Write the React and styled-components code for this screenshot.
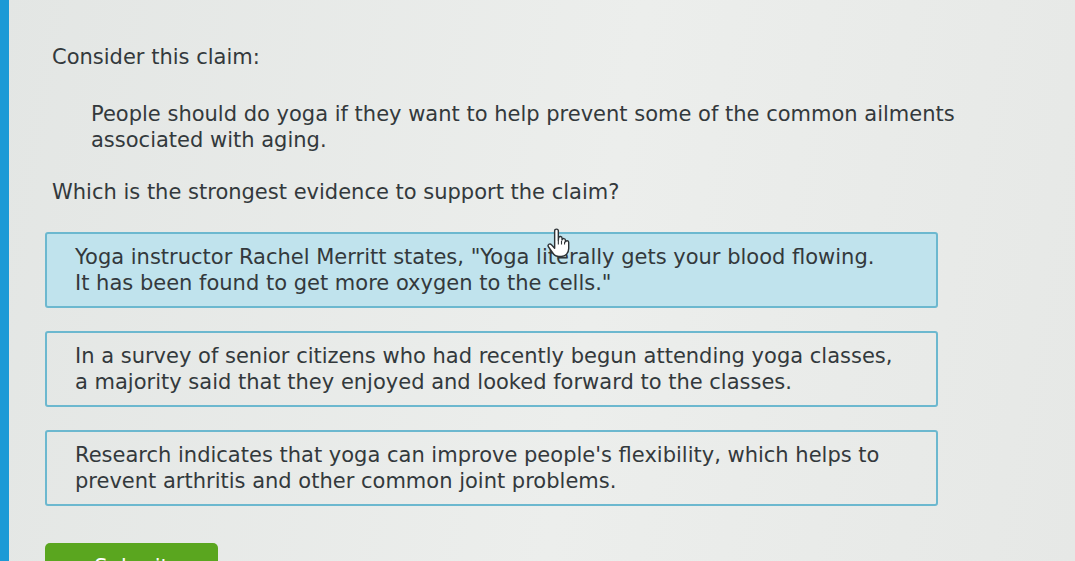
import React from 'react';
import styled, {createGlobalStyle} from 'styled-components';

const colors = {
  page: '#e7e9e7',
  text: '#33393c',
  edge: '#1c9ad6',
  border: '#6cb8cf',
  selected: '#c0e3ed',
  submit: '#5aa61f',
};

const GlobalStyle = createGlobalStyle`
  html, body {
    margin: 0;
    padding: 0;
    background: ${colors.page};
    overflow: hidden;
  }
`;

const Page = styled.div`
  width: 1075px;
  height: 561px;
  display: flex;
  background: linear-gradient(100deg, #e3e6e4 0%, #eceeec 55%, #e6e8e6 100%);
  font-family: "DejaVu Sans", Verdana, sans-serif;
  font-size: 21px;
  line-height: 26px;
  color: ${colors.text};
  overflow: hidden;
`;

const Edge = styled.div`
  width: 9px;
  flex-shrink: 0;
  background: ${colors.edge};
`;

const Content = styled.div`
  flex: 1;
  padding: 44px 0 0 36px;
  display: flex;
  flex-direction: column;
`;

const Heading = styled.div`
  padding-left: 7px;
`;

const Claim = styled.div`
  margin: 31px 0 0 46px;
`;

const Question = styled.div`
  margin-top: 26px;
  padding-left: 7px;
`;

const Options = styled.div`
  margin-top: 27px;
  width: 893px;
  display: flex;
  flex-direction: column;
  gap: 23px;
`;

const Option = styled.div`
  position: relative;
  box-sizing: border-box;
  padding: 10px 20px 10px 28px;
  border: 2px solid ${colors.border};
  border-radius: 3px;
  background: ${p => (p.$selected ? colors.selected : 'transparent')};
`;

const Pointer = styled.svg`
  position: absolute;
  left: 500px;
  top: -6px;
  width: 24px;
  height: 31px;
`;

const Submit = styled.button`
  margin-top: 37px;
  width: 173px;
  height: 44px;
  border: none;
  border-radius: 5px;
  background: ${colors.submit};
  color: #fff;
  font-family: inherit;
  font-size: 21px;
  line-height: 26px;
  padding: 11px 0 0;
  align-self: flex-start;
  display: flex;
  justify-content: center;
  align-items: flex-start;
`;

const HandCursor = () => (
  <Pointer viewBox="0 0 22 28">
    <path
      d="M7 2.5c0-1 .8-1.7 1.7-1.7s1.7.7 1.7 1.7v8.5l.2-2c.1-.9.9-1.5 1.8-1.4.8.1 1.4.8 1.4 1.6v1.5c.2-.8.9-1.3 1.7-1.2.8.1 1.4.8 1.4 1.6v1.4c.3-.7 1-1.1 1.7-1 .8.1 1.3.8 1.3 1.6v5.5c0 4-2.8 7.3-6.8 7.3h-2.2c-2.4 0-4.3-1.2-5.6-3.2L1.3 17c-.5-.8-.3-1.8.4-2.3.8-.5 1.8-.3 2.4.4L7 18.3z"
      fill="#fff"
      stroke="#2e3336"
      strokeWidth="1.3"
      strokeLinejoin="round"
    />
    <path d="M10.4 11v4M13.3 11.5v3.5M16.1 12.5v2.5" stroke="#2e3336" strokeWidth="1" />
  </Pointer>
);

const App = () => {
  return (
    <Page>
      <GlobalStyle />
      <Edge />
      <Content>
        <Heading>Consider this claim:</Heading>
        <Claim>
          People should do yoga if they want to help prevent some of the common ailments
          <br />
          associated with aging.
        </Claim>
        <Question>Which is the strongest evidence to support the claim?</Question>
        <Options>
          <Option $selected>
            Yoga instructor Rachel Merritt states, "Yoga literally gets your blood flowing.
            <br />
            It has been found to get more oxygen to the cells."
            <HandCursor />
          </Option>
          <Option>
            In a survey of senior citizens who had recently begun attending yoga classes,
            <br />
            a majority said that they enjoyed and looked forward to the classes.
          </Option>
          <Option>
            Research indicates that yoga can improve people's flexibility, which helps to
            <br />
            prevent arthritis and other common joint problems.
          </Option>
        </Options>
        <Submit>Submit</Submit>
      </Content>
    </Page>
  );
};

export default App;
